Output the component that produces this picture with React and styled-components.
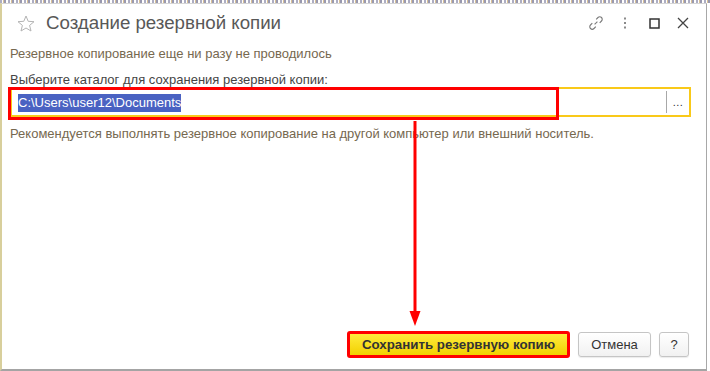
import React from "react";
import styled, { createGlobalStyle } from "styled-components";

const Global = createGlobalStyle`
  html, body {
    margin: 0;
    padding: 0;
    background: #fff;
  }
  body {
    font-family: "Liberation Sans", Arial, sans-serif;
  }
`;

const Page = styled.div`
  position: relative;
  width: 710px;
  height: 371px;
  overflow: hidden;
  background: #fff;
`;

/* fragments of the page behind the dialog */
const BackdropStrip = styled.div`
  height: 3px;
  background: repeating-linear-gradient(
    90deg,
    #8a8aa8 0 2px,
    #fff 2px 3px,
    #c9a76a 3px 4px,
    #6d6d8d 4px 6px,
    #fff 6px 8px
  );
  opacity: 0.7;
`;

const Window = styled.div`
  position: relative;
  box-sizing: border-box;
  width: 707px;
  height: 368px;
  display: flex;
  flex-direction: column;
  background: #fff;
  border-top: 1px solid #d6d6d6;
  border-left: 2px solid #d8cf9c;
  border-right: 1px solid #a8a8a8;
  border-bottom: 2px solid #a4a4a4;
`;

const Header = styled.div`
  display: flex;
  align-items: center;
  height: 38px;
  padding: 0 9px 0 15px;
`;

const Title = styled.div`
  margin-left: 11px;
  font-size: 18.7px;
  color: #585858;
`;

const HeaderTools = styled.div`
  margin-left: auto;
  display: flex;
  align-items: center;
`;

const ToolIcon = styled.div`
  width: ${p => p.w || 30}px;
  height: 20px;
  display: flex;
  align-items: center;
  justify-content: center;
`;

const Body = styled.div`
  flex: 1;
  display: flex;
  flex-direction: column;
  padding: 0 15px 0 8px;
`;

const Note = styled.div`
  font-size: 13px;
  line-height: 15px;
  color: ${p => (p.dark ? "#454545" : "#76684f")};
  margin-top: ${p => p.top || 0}px;
`;

const Field = styled.div`
  position: relative;
  display: flex;
  align-items: center;
  height: 30px;
  box-sizing: border-box;
  border: 2px solid #f9c919;
  background: #fff;
`;

const FieldValue = styled.div`
  flex: 1;
  padding-left: 6px;
  font-size: 13px;
`;

const Selected = styled.span`
  background: #4a62c2;
  color: #fff;
  padding: 1px 0 2px;
`;

const FieldButton = styled.div`
  width: 22px;
  height: 22px;
  border-left: 1px solid #a8a8a8;
  display: flex;
  align-items: center;
  justify-content: center;
  font-size: 11px;
  color: #333;
  letter-spacing: 0.5px;
`;

const Highlight = styled.div`
  position: absolute;
  left: -4px;
  top: -2px;
  width: ${p => p.w}px;
  height: 33px;
  box-sizing: border-box;
  border: 3px solid #ff0000;
  pointer-events: none;
`;

const Footer = styled.div`
  display: flex;
  justify-content: flex-end;
  align-items: center;
  gap: 8px;
  padding: 0 17px 11px 0;
`;

const Button = styled.button`
  box-sizing: border-box;
  flex: none;
  height: ${p => (p.primary ? 27 : 25)}px;
  width: ${p => p.w}px;
  padding: 0;
  font-family: "Liberation Sans", Arial, sans-serif;
  font-size: ${p => (p.primary ? 13.3 : 13)}px;
  font-weight: ${p => (p.primary ? "bold" : "normal")};
  color: #333;
  border-radius: 3px;
  border: ${p => (p.primary ? "3px solid #ff0000" : "1px solid #c5c5c5")};
  background: ${p =>
    p.primary
      ? "linear-gradient(#ffec3d, #f2d000)"
      : "linear-gradient(#ffffff, #f1f1f1)"};
  box-shadow: ${p => (p.primary ? "none" : "0 1px 1px rgba(0,0,0,0.08)")};
  cursor: pointer;
`;

const Arrow = styled.svg`
  position: absolute;
  left: 402px;
  top: 117px;
  pointer-events: none;
`;

const StarIcon = () => (
  <svg width="18" height="17" viewBox="0 0 18 17">
    <path
      d="M9 1 L11.2 6.3 L17 6.7 L12.6 10.4 L14 16 L9 13 L4 16 L5.4 10.4 L1 6.7 L6.8 6.3 Z"
      fill="none"
      stroke="#b4b4b4"
      strokeWidth="1"
      strokeLinejoin="round"
    />
  </svg>
);

const LinkIcon = () => (
  <svg width="16" height="16" viewBox="0 0 16 16" fill="none" stroke="#7a7a7a" strokeWidth="1.1">
    <path d="M6.6 9.4 L9.4 6.6" />
    <path d="M8.2 4.3 L10 2.5 a2.4 2.4 0 0 1 3.5 3.5 L11.7 7.8" />
    <path d="M7.8 11.7 L6 13.5 a2.4 2.4 0 0 1 -3.5 -3.5 L4.3 8.2" />
  </svg>
);

const DotsIcon = () => (
  <svg width="4" height="12" viewBox="0 0 4 12" fill="#8a8a8a">
    <rect x="1" y="0.5" width="2" height="2" />
    <rect x="1" y="5" width="2" height="2" />
    <rect x="1" y="9.5" width="2" height="2" />
  </svg>
);

const MaxIcon = () => (
  <svg width="11" height="11" viewBox="0 0 11 11">
    <rect x="1" y="1" width="9" height="9" fill="none" stroke="#333" strokeWidth="1.5" />
  </svg>
);

const CloseIcon = () => (
  <svg width="12" height="12" viewBox="0 0 12 12" stroke="#444" strokeWidth="1.3">
    <path d="M1 1 L11 11 M11 1 L1 11" />
  </svg>
);

export default function App() {
  return (
    <Page>
      <Global />
      <BackdropStrip />
      <Window>
        <Header>
          <StarIcon />
          <Title>Создание резервной копии</Title>
          <HeaderTools>
            <ToolIcon w={30}>
              <LinkIcon />
            </ToolIcon>
            <ToolIcon w={28}>
              <DotsIcon />
            </ToolIcon>
            <ToolIcon w={30}>
              <MaxIcon />
            </ToolIcon>
            <ToolIcon w={28}>
              <CloseIcon />
            </ToolIcon>
          </HeaderTools>
        </Header>

        <Body>
          <Note top={4}>Резервное копирование еще ни разу не проводилось</Note>
          <Note dark top={11}>Выберите каталог для сохранения резервной копии:</Note>
          <Field>
            <FieldValue>
              <Selected>C:\Users\user12\Documents</Selected>
            </FieldValue>
            <FieldButton>...</FieldButton>
            <Highlight w={551} />
          </Field>
          <Note top={9}>
            Рекомендуется выполнять резервное копирование на другой компьютер или внешний носитель.
          </Note>
        </Body>

        <Footer>
          <Button primary w={223}>Сохранить резервную копию</Button>
          <Button w={73}>Отмена</Button>
          <Button w={30}>?</Button>
        </Footer>

        <Arrow width="22" height="210" viewBox="0 0 22 210">
          <line x1="11" y1="0" x2="11" y2="196" stroke="#ff0000" strokeWidth="3" />
          <polygon points="5.5,190 16.5,190 11,205" fill="#ff0000" />
        </Arrow>
      </Window>
    </Page>
  );
}
